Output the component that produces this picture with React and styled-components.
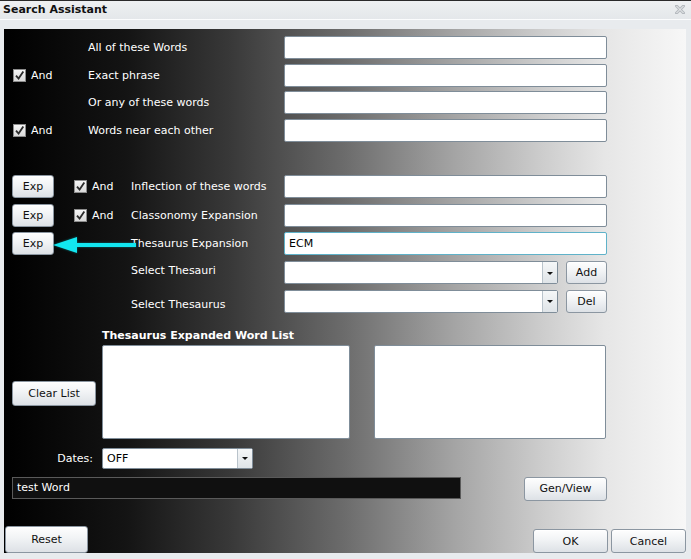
import styled, { createGlobalStyle } from "styled-components";

const GlobalStyle = createGlobalStyle`
  html, body {
    margin: 0;
    padding: 0;
    background: #e8ebee;
  }
  * {
    box-sizing: border-box;
  }
`;

// 창 전체
const Window = styled.div`
  width: 691px;
  height: 559px;
  background: #e8ebee;
  font-family: "DejaVu Sans", Verdana, sans-serif;
  font-size: 11px;
  color: #000;
  overflow: hidden;
  display: flex;
  flex-direction: column;
`;

const TitleBar = styled.div`
  height: 20px;
  border-top: 1px solid #2a2a2a;
  border-bottom: 1px solid #fbfcfd;
  background: linear-gradient(#eef0f2, #e4e7ea);
  display: flex;
  align-items: center;
  justify-content: space-between;
  padding: 0 6px 1px 3px;
`;

const Title = styled.span`
  font-weight: bold;
  font-size: 11px;
  color: #111;
`;

const Body = styled.div`
  flex: 1;
  padding: 9px 5px 0 4px;
`;

const Panel = styled.div`
  position: relative;
  height: 524px;
  padding: 7px 0 0 8px;
  display: flex;
  flex-direction: column;
  overflow: hidden;
  background: linear-gradient(
    to right,
    #000 0%,
    #141414 18%,
    #383838 33%,
    #6c6c6c 50%,
    #a4a4a4 66%,
    #cdcdcd 79%,
    #e6e6e6 88%,
    #f7f7f7 100%
  );
`;

const WordGrid = styled.div`
  display: grid;
  grid-template-columns: 76px 196px 323px;
  grid-auto-rows: 23px;
  row-gap: 4.67px;
  align-items: center;
`;

const ExpGrid = styled.div`
  display: grid;
  grid-template-columns: 62px 57px 153px 323px;
  grid-auto-rows: 23px;
  row-gap: 5.75px;
  align-items: center;
  margin-top: 33px;
`;

const Label = styled.span`
  color: #fff;
  white-space: nowrap;
  grid-column: ${(p) => p.$col || "auto"};
  transform: translateY(${(p) => p.$shift || 0}px);
`;

const AndBox = styled.label`
  display: flex;
  align-items: center;
  gap: 5px;
  color: #fff;
  padding-left: ${(p) => (p.$inset ? "1px" : "0")};
  grid-column: ${(p) => p.$col || "auto"};
`;

const CheckBox = styled.span`
  width: 13px;
  height: 13px;
  border: 1px solid #8c8c8c;
  background: linear-gradient(#f6f6f6, #d9d9d9);
  display: flex;
  align-items: center;
  justify-content: center;
`;

const TextBox = styled.div`
  height: 100%;
  background: #fff;
  border: 1px solid ${(p) => (p.$focused ? "#5fb2c9" : "#7f8d99")};
  border-radius: 2px;
  padding: 0 4px;
  display: flex;
  align-items: center;
  grid-column: ${(p) => p.$col || "auto"};
`;

const ComboCell = styled.div`
  grid-column: 4;
  height: 100%;
  display: flex;
  gap: 8px;
`;

const Combo = styled.div`
  width: ${(p) => p.$w}px;
  height: ${(p) => p.$h || 23}px;
  background: #fff;
  border: 1px solid #7f8d99;
  border-radius: 2px;
  display: flex;
  align-items: stretch;
`;

const ComboText = styled.span`
  flex: 1;
  padding-left: 4px;
  display: flex;
  align-items: center;
`;

const ComboArrow = styled.span`
  width: 15px;
  border-left: 1px solid #b9c3cb;
  background: linear-gradient(#f5f7f8, #dfe4e8);
  display: flex;
  align-items: center;
  justify-content: center;
  &::after {
    content: "";
    border-left: 3px solid transparent;
    border-right: 3px solid transparent;
    border-top: 3px solid #111;
    margin-top: 1px;
  }
`;

const Button = styled.button`
  width: ${(p) => p.$w}px;
  height: ${(p) => p.$h || 23}px;
  padding: 0;
  border: 1px solid #8b96a1;
  border-radius: 3px;
  background: linear-gradient(#fefefe 0%, #f1f3f5 45%, #dde1e6 100%);
  font-family: inherit;
  font-size: 11px;
  color: #111;
  box-shadow: inset 0 1px 0 #fff;
`;

const ListGrid = styled.div`
  display: grid;
  grid-template-columns: 90px 248px 24px 232px;
  grid-template-rows: 16px 94px;
  margin-top: 16px;
`;

const ListTitle = styled.span`
  grid-column: 2 / 5;
  grid-row: 1;
  color: #fff;
  font-weight: bold;
  line-height: 14px;
`;

const ClearCell = styled.div`
  grid-column: 1;
  grid-row: 2;
  align-self: center;
  padding-top: 3px;
`;

const ListBox = styled.div`
  grid-row: 2;
  grid-column: ${(p) => p.$col};
  background: #fff;
  border: 1px solid #7f8d99;
  border-radius: 2px;
`;

const DatesRow = styled.div`
  display: flex;
  align-items: center;
  margin-top: 9px;
`;

const DatesLabel = styled.span`
  width: 90px;
  text-align: right;
  padding-right: 9px;
  color: #fff;
`;

const GenRow = styled.div`
  width: 595px;
  display: flex;
  align-items: flex-start;
  justify-content: space-between;
  margin-top: 8px;
`;

const DarkField = styled.div`
  width: 449px;
  height: 22px;
  background: #101010;
  border: 1px solid #5a5a5a;
  color: #fff;
  padding-left: 4px;
  display: flex;
  align-items: center;
`;

const BottomBar = styled.div`
  margin-top: auto;
  margin-left: -7px;
  margin-bottom: 0;
  display: flex;
  align-items: flex-end;
  gap: 3px;
`;

const Spacer = styled.div`
  flex: 1;
`;

const ArrowMark = styled.svg`
  position: absolute;
  left: 48px;
  top: 206px;
  filter: drop-shadow(0 0 1px rgba(0, 160, 170, 0.6));
`;

const Check = () => (
  <CheckBox>
    <svg width="11" height="11" viewBox="0 0 11 11">
      <path d="M2 5.6 L4.6 8.6 L9.3 1.6" fill="none" stroke="#2b2b2b" strokeWidth="1.8" />
    </svg>
  </CheckBox>
);

const CloseIcon = () => (
  <svg width="10" height="9" viewBox="0 0 10 9">
    <path d="M1.5 1 L8.5 8 M8.5 1 L1.5 8" stroke="#b4b9be" strokeWidth="3" strokeLinecap="square" />
    <path d="M1.5 1 L8.5 8 M8.5 1 L1.5 8" stroke="#f2f4f5" strokeWidth="1" />
  </svg>
);

const App = () => {
  return (
    <>
      <GlobalStyle />
      <Window>
        <TitleBar>
          <Title>Search Assistant</Title>
          <CloseIcon />
        </TitleBar>
        <Body>
          <Panel>
            <WordGrid>
              <Label $col={2}>All of these Words</Label>
              <TextBox />
              <AndBox $inset>
                <Check />
                And
              </AndBox>
              <Label>Exact phrase</Label>
              <TextBox />
              <Label $col={2}>Or any of these words</Label>
              <TextBox />
              <AndBox $inset>
                <Check />
                And
              </AndBox>
              <Label>Words near each other</Label>
              <TextBox />
            </WordGrid>

            <ExpGrid>
              <Button $w={42}>Exp</Button>
              <AndBox>
                <Check />
                And
              </AndBox>
              <Label>Inflection of these words</Label>
              <TextBox />

              <Button $w={42}>Exp</Button>
              <AndBox>
                <Check />
                And
              </AndBox>
              <Label>Classonomy Expansion</Label>
              <TextBox />

              <Button $w={42}>Exp</Button>
              <Label $col={3}>Thesaurus Expansion</Label>
              <TextBox $focused>ECM</TextBox>

              <Label $col={3} $shift={-2}>
                Select Thesauri
              </Label>
              <ComboCell>
                <Combo $w={274}>
                  <ComboText />
                  <ComboArrow />
                </Combo>
                <Button $w={41}>Add</Button>
              </ComboCell>

              <Label $col={3} $shift={3}>
                Select Thesaurus
              </Label>
              <ComboCell>
                <Combo $w={274}>
                  <ComboText />
                  <ComboArrow />
                </Combo>
                <Button $w={41}>Del</Button>
              </ComboCell>
            </ExpGrid>

            <ListGrid>
              <ListTitle>Thesaurus Expanded Word List</ListTitle>
              <ClearCell>
                <Button $w={84} $h={25}>
                  Clear List
                </Button>
              </ClearCell>
              <ListBox $col={2} />
              <ListBox $col={4} />
            </ListGrid>

            <DatesRow>
              <DatesLabel>Dates:</DatesLabel>
              <Combo $w={151} $h={21}>
                <ComboText>OFF</ComboText>
                <ComboArrow />
              </Combo>
            </DatesRow>

            <GenRow>
              <DarkField>test Word</DarkField>
              <Button $w={83} $h={24}>
                Gen/View
              </Button>
            </GenRow>

            <BottomBar>
              <Button $w={83} $h={27}>
                Reset
              </Button>
              <Spacer />
              <Button $w={75} $h={24}>
                OK
              </Button>
              <Button $w={75} $h={24}>
                Cancel
              </Button>
            </BottomBar>

            <ArrowMark width="86" height="20" viewBox="0 0 86 20">
              <polygon points="1,10 25,2 25,18" fill="#12e6f0" />
              <rect x="23" y="8" width="61" height="4" fill="#12e6f0" />
            </ArrowMark>
          </Panel>
        </Body>
      </Window>
    </>
  );
};

export default App;
